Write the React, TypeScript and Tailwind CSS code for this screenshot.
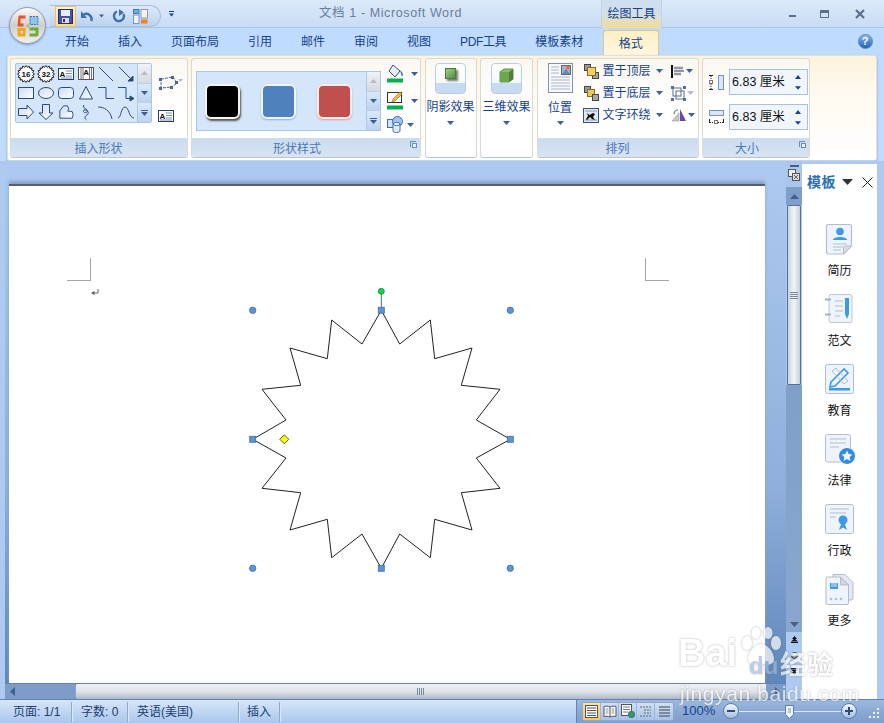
import React from "react";

const LINE = "#2a4a7c";

function Arrow({ c = "#3b5f96", w = 7 }: { c?: string; w?: number }) {
  return (
    <svg width={w} height={4} viewBox="0 0 7 4" className="shrink-0">
      <path d="M0 0h7L3.5 4z" fill={c} />
    </svg>
  );
}

function OfficeButton() {
  return (
    <div className="absolute left-[9px] top-[7px] w-[37px] h-[37px] rounded-full border border-[#8d9cb3] bg-linear-to-b from-[#fafafa] via-[#cfcfcf] to-[#efefef] shadow-[0_1px_2px_#7f93b3] flex items-center justify-center z-20">
      <svg width="24" height="24" viewBox="0 0 24 24">
        <path d="M2.500 1.500h7v3h-5v5h3v3h-5a1.500 1.500 0 0 1-1-1z" fill="#e8552a" />
        <rect x="5.500" y="5" width="4" height="4" fill="#f8d8c0" />
        <rect x="14" y="2.500" width="8" height="8" fill="#8fc4e8" stroke="#2c79b0" strokeWidth="1" strokeDasharray="2 1" />
        <path d="M1.500 14h8v8.500h-7a1 1 0 0 1-1-1zM4.500 17v2.500h2.500V17z" fill="#f2a71b" fillRule="evenodd" />
        <path d="M13.500 13.500h9v7a2 2 0 0 1-2 2h-7v-3h6v-3h-6z" fill="#6cae2f" />
        <path d="M10 12h4M12 10v4" stroke="#b5c07a" strokeWidth="1.400" />
      </svg>
    </div>
  );
}

function QuickAccess() {
  return (
    <div className="ml-[50px] mt-[5px] h-[22px] w-[111px] rounded-r-full border border-l-0 border-[#a9c0e0] bg-linear-to-b from-[#dfeafa] to-[#bcd2ef] flex items-center pl-[5px] shrink-0">
      <div className="w-[21px] h-[21px] border border-[#e3c27a] bg-linear-to-b from-[#fff4cf] to-[#ffd983] flex items-center justify-center">
        <svg width="15" height="15" viewBox="0 0 15 15">
          <rect x="0.5" y="0.5" width="14" height="14" fill="#4a4fa8" stroke="#2a2a70" />
          <rect x="3" y="1" width="9" height="6" fill="#e8ecf8" />
          <rect x="4" y="9" width="7" height="5" fill="#ddd" />
          <rect x="5" y="10" width="2" height="3" fill="#333" />
        </svg>
      </div>
      <svg width="14" height="14" viewBox="0 0 14 14" className="ml-[4px]">
        <path d="M11.5 12C12.5 6.500 8 3.500 3.500 5.500" fill="none" stroke="#3d6fb2" strokeWidth="2.4" />
        <path d="M1 2v7h6z" fill="#3d6fb2" />
      </svg>
      <span className="ml-[5px]"><Arrow w={5} /></span>
      <svg width="14" height="14" viewBox="0 0 14 14" className="ml-[8px]">
        <path d="M5 2.500A5 5 0 1 0 11.500 5" fill="none" stroke="#3d6fb2" strokeWidth="2.4" />
        <path d="M7 0v7l5-3.500z" fill="#3d6fb2" />
      </svg>
      <svg width="15" height="15" viewBox="0 0 15 15" className="ml-[7px]">
        <rect x="0.5" y="0.5" width="5.500" height="4" fill="#5fb0e0" stroke="#4a80b8" />
        <rect x="0.5" y="6" width="5.500" height="8.500" fill="#eef3fa" stroke="#7a93b8" />
        <rect x="8" y="0.5" width="6.500" height="8.500" fill="#f2f2f2" stroke="#8a9ab0" />
        <rect x="8" y="10.500" width="6.500" height="4" fill="#f08020" />
      </svg>
    </div>
  );
}

function TitleBar() {
  return (
    <div className="h-[28px] flex bg-linear-to-b from-[#dce9f9] to-[#c9dcf5] border-b border-[#a9c5ea] shrink-0">
      <QuickAccess />
      <div className="ml-[5px] mt-[11px] flex flex-col items-center gap-[1px] w-[10px] shrink-0">
        <div className="w-[5px] h-[1px] bg-[#15428b]" />
        <Arrow c="#15428b" w={5} />
      </div>
      <div className="ml-[143px] mt-[4px] w-[148px] text-[12.5px] leading-[18px] tracking-[0.6px] text-[#6a7d9c] whitespace-nowrap shrink-0">文档 1 - Microsoft Word</div>
      <div className="ml-[134px] w-[61px] h-[28px] border-x border-[#c3d2e6] bg-linear-to-b from-[#cfdef2] via-[#d3dfe6] to-[#f4dc92] text-center text-[12px] leading-[29px] text-[#15428b] shrink-0">绘图工具</div>
      <div className="ml-[127px] mt-[15px] w-[7px] h-[2px] bg-[#5b6f8c] shrink-0" />
      <div className="ml-[24px] mt-[10px] w-[9px] h-[8px] border border-[#5b6f8c] border-t-[3px] shrink-0" />
      <svg width="10" height="10" viewBox="0 0 10 10" className="ml-[26px] mt-[9px] shrink-0">
        <path d="M1 1l8 8M9 1L1 9" stroke="#5b6f8c" strokeWidth="2.2" />
      </svg>
    </div>
  );
}

const TABS = ["开始", "插入", "页面布局", "引用", "邮件", "审阅", "视图", "PDF工具", "模板素材"];

function Tabs() {
  return (
    <div className="h-[27px] bg-[#bfdbff] flex items-end pl-[50.5px] shrink-0">
      {TABS.map((t) => (
        <div key={t} className={`h-[27px] px-[14.5px] text-[12px] leading-[29px] text-[#15428b] whitespace-nowrap ${t === "PDF工具" ? "tracking-[-0.4px]" : ""}`}>{t}</div>
      ))}
      <div className="ml-[5px] w-[56px] h-[25px] rounded-t-[3px] border border-b-0 border-[#dcc88a] bg-linear-to-b from-[#fff0c4] to-[#fff6de] text-center text-[12px] leading-[26px] text-[#15428b]">格式</div>
      <div className="ml-[199px] mb-[6px] w-[15px] h-[15px] rounded-full border border-[#5a86c4] bg-linear-to-b from-[#8ab8f0] to-[#1f5fc0] text-white text-[11px] leading-[13px] text-center font-bold">?</div>
    </div>
  );
}

function Launcher() {
  return (
    <svg width="7" height="7" viewBox="0 0 7 7" className="shrink-0">
      <path d="M0.500 6V0.500H6" fill="none" stroke="#6b8cb8" />
      <rect x="2.500" y="2.500" width="4" height="4" fill="#e8f0fa" stroke="#6b8cb8" />
    </svg>
  );
}

function Group({ w, label, launcher, children }: { w: string; label?: string; launcher?: boolean; children: React.ReactNode }) {
  return (
    <div className={`${w} h-[100px] rounded-[3px] border border-[#d9d9d6] border-b-[#b9c4d4] bg-linear-to-b from-[#fbf8f1] via-[#ffffff] to-[#ffffff] flex flex-col shrink-0 overflow-hidden`}>
      <div className="h-[80px] flex">{children}</div>
      <div className={`h-[19px] pt-[3px] flex items-center justify-center relative text-[12px] text-[#4a78b6] ${label ? "bg-linear-to-b from-[#cbdcf0] to-[#d8e3f3]" : ""} ${launcher ? "pr-[18px]" : ""}`}>
        {label}
        {launcher && <span className="absolute right-[3px] top-[3px] flex"><Launcher /></span>}
      </div>
    </div>
  );
}

function Scroller({ h }: { h: string }) {
  const cell = "flex-1 flex items-center justify-center border-t border-[#b9cfec] bg-linear-to-b from-[#dce8f8] to-[#bdd3ef]";
  return (
    <div className={`w-[14px] ${h} flex flex-col shrink-0 border-l border-[#b0c8e6]`}>
      <div className="flex-1 flex items-center justify-center bg-linear-to-b from-[#f0f2f4] to-[#d5dae0]">
        <svg width="7" height="4" viewBox="0 0 7 4"><path d="M0 4h7L3.500 0z" fill="#b5bcc6" /></svg>
      </div>
      <div className={cell}><Arrow /></div>
      <div className={cell}>
        <div className="flex flex-col items-center gap-[1px]"><div className="w-[7px] h-[1px] bg-[#3b5f96]" /><Arrow /></div>
      </div>
    </div>
  );
}

function Burst({ t }: { t: string }) {
  const pts: string[] = [];
  for (let i = 0; i < 32; i++) {
    const r = i % 2 ? 6.8 : 8.5;
    const a = (i * Math.PI) / 16;
    pts.push(`${(9 + r * Math.sin(a)).toFixed(2)},${(9 - r * Math.cos(a)).toFixed(2)}`);
  }
  return (
    <svg width="18" height="18" viewBox="0 0 18 18">
      <polygon points={pts.join(" ")} fill="#fff" stroke="#222" strokeWidth="1" />
      <text x="9" y="12" textAnchor="middle" fontSize="8" fontWeight="700" fill="#111" fontFamily="Liberation Sans">{t}</text>
    </svg>
  );
}

const S = ({ children }: { children: React.ReactNode }) => (
  <svg width="18" height="18" viewBox="0 0 18 18" fill="none" stroke={LINE} strokeWidth="1">{children}</svg>
);

const GRAD = "url(#shapeFill)";

const SHAPES: React.ReactNode[] = [
  <Burst t="16" />,
  <Burst t="32" />,
  <S><rect x="1.500" y="3.500" width="15" height="11" fill="#fff" stroke="#1f3f6f" /><text x="5.500" y="12" fontSize="8" fontWeight="700" fill="#111" stroke="none" textAnchor="middle" fontFamily="Liberation Sans">A</text><path d="M9 6h6M9 8.500h6M9 11h6M4 13h11" stroke="#7d8ea8" /></S>,
  <S><rect x="1.500" y="2.500" width="15" height="12" fill="#fff" stroke="#555" /><path d="M4 3v11M6 3v11M12.500 3v11M14.500 3v11" stroke="#777" /><text x="9.200" y="10" fontSize="8" fontWeight="700" fill="#111" stroke="none" textAnchor="middle" fontFamily="Liberation Sans">A</text></S>,
  <S><path d="M2 2l14 14" /></S>,
  <S><path d="M2 2l13 13" /><path d="M11 16h5v-5z" fill={LINE} /></S>,
  <S><rect x="1.500" y="3.500" width="15" height="11" fill={GRAD} /></S>,
  <S><ellipse cx="9" cy="9" rx="7.500" ry="5.500" fill={GRAD} /></S>,
  <S><rect x="1.500" y="3.500" width="15" height="11" rx="3" fill={GRAD} /></S>,
  <S><path d="M9 2.500l6.500 12.500h-13z" fill={GRAD} /></S>,
  <S><path d="M1 3.500h8v11h8" /></S>,
  <S><path d="M1 3.500h8v11h5" /><path d="M13 12l4 2.500-4 2.500z" fill={LINE} /></S>,
  <S><path d="M1.500 5.500h8.500V2l6.500 7-6.500 7v-3.500H1.500z" fill={GRAD} /></S>,
  <S><path d="M5.500 1.500h7v8.500H16l-7 6.500L2 10h3.500z" fill={GRAD} /></S>,
  <S><path d="M2.500 15.500v-8l4-5h4l1.500 3.500-1.500 2 5 .5 1 3.500-1 3.500z" fill={GRAD} transform="scale(.95) translate(.5 .5)" /></S>,
  <S><path d="M7 2c-3 3 5 4 3 7-2 2-5-1-3-2 3-1 6 3 3 5-2 1-3 3-.5 5" /></S>,
  <S><path d="M1 4c6 0 12 3 14 12" /></S>,
  <S><path d="M1 15c3 0 3-11 7-11s4 11 9 11" /></S>,
];

function InsertShapes() {
  return (
    <Group w="w-[178px]" label="插入形状">
      <div className="ml-[4px] mt-[4px] w-[137px] h-[60px] rounded-[2px] border border-[#a9c6ea] bg-[#d6e6fa] flex shrink-0">
        <div className="flex-1 grid grid-cols-6 grid-rows-3">
          {SHAPES.map((s, i) => (
            <div key={i} className="flex items-center justify-center">{s}</div>
          ))}
        </div>
        <Scroller h="h-[58px]" />
      </div>
      <div className="ml-[5px] flex flex-col items-center">
        <svg width="26" height="16" viewBox="0 0 26 16" className="mt-[16px]">
          <path d="M4 4l12-2 4 6-5 4-11 1z" fill="none" stroke="#4a668f" strokeDasharray="3 1" />
          <g fill="#4a668f"><rect x="2" y="3" width="3" height="3" /><rect x="14" y="1" width="3" height="3" /><rect x="18" y="6" width="3" height="3" /><rect x="13" y="11" width="3" height="3" /><rect x="2" y="12" width="3" height="3" /></g>
          <path d="M21 4h5l-2.500 3z" fill="#b5bcc6" />
        </svg>
        <svg width="16" height="14" viewBox="0 0 16 14" className="mt-[18px] mr-[8px]">
          <rect x="0.500" y="1.500" width="15" height="11" fill="#fff" stroke="#1f3f6f" />
          <text x="4.500" y="10" fontSize="8" fontWeight="700" fill="#111" textAnchor="middle" fontFamily="Liberation Sans">A</text>
          <path d="M8 4h6M8 6.500h6M8 9h6M2 11h12" stroke="#7d8ea8" />
        </svg>
      </div>
    </Group>
  );
}

function Swatch({ c, b, s }: { c: string; b: string; s: string }) {
  return <div className={`w-[35px] h-[35px] rounded-[6px] border-[2px] ${c} ${b} ${s}`} />;
}

function ShapeStyles() {
  return (
    <Group w="w-[230px]" label="形状样式" launcher>
      <div className="ml-[4px] mt-[12px] w-[185px] h-[60px] border border-[#a9c6ea] bg-[#d6e6fa] flex shrink-0">
        <div className="flex-1 flex items-center pl-[8px] gap-[21px]">
          <Swatch c="bg-black" b="border-[#f4f4f4]" s="shadow-[1px_2px_2px_#555]" />
          <Swatch c="bg-[#4f81bd]" b="border-[#eef4fb]" s="shadow-[0_1px_2px_#8fb0d8]" />
          <Swatch c="bg-[#c0504d]" b="border-[#fbeeee]" s="shadow-[0_1px_2px_#d8a0a0]" />
        </div>
        <Scroller h="h-[58px]" />
      </div>
      <div className="ml-[6px] mt-[5px] flex flex-col gap-[8px]">
        <div className="flex items-center h-[19px] gap-[3px]">
          <svg width="17" height="19" viewBox="0 0 17 19">
            <path d="M6 1l7 6-5 6-6-6z" fill="#e8eef8" stroke="#334a72" />
            <path d="M13 6c2 2 3 3 3 5s-2 1-2-1z" fill="#3f7ccc" />
            <rect x="0" y="14.500" width="16" height="4" fill="#00b050" />
          </svg>
          <span className="ml-[4px]"><Arrow /></span>
        </div>
        <div className="flex items-center h-[19px] gap-[3px]">
          <svg width="17" height="19" viewBox="0 0 17 19">
            <rect x="0.500" y="1.500" width="14" height="10" fill="#fff" stroke="#333" />
            <path d="M5 11l1-3 7-7 2 2-7 7z" fill="#f0b840" stroke="#8a6a20" strokeWidth=".6" />
            <rect x="0" y="14.500" width="16" height="4" fill="#00b050" />
          </svg>
          <span className="ml-[4px]"><Arrow /></span>
        </div>
        <div className="flex items-center h-[17px] gap-[2px] -mt-[2px]">
          <svg width="18" height="17" viewBox="0 0 18 17">
            <rect x="0.500" y="3.500" width="9" height="8" fill="#cfe2f8" stroke="#3f70a8" />
            <circle cx="10.500" cy="5.500" r="5" fill="#9cc4ee" stroke="#3f70a8" />
            <path d="M6 8v7c0 2 7 2 7 0V8" fill="#dcebfb" stroke="#3f70a8" />
            <ellipse cx="9.500" cy="8" rx="3.500" ry="1.500" fill="#fff" stroke="#3f70a8" />
          </svg>
          <Arrow />
        </div>
      </div>
    </Group>
  );
}

function EffectButton({ label, cube }: { label: string; cube?: boolean }) {
  return (
    <div className="w-full flex flex-col items-center pt-[4px]">
      <div className="w-[31px] h-[31px] rounded-[4px] border border-[#b8cde6] bg-linear-to-b from-[#ffffff] via-[#f5f8fc] via-65% to-[#c6daf1] to-65% flex justify-center pt-[4px]">
        {cube ? (
          <svg width="15" height="15" viewBox="0 0 15 15">
            <path d="M1 4l4-3h9v10l-4 3H1z" fill="#8fbf6a" stroke="#5d8c48" />
            <path d="M1 4h9v10H1z" fill="#6ea552" />
            <path d="M10 4l4-3v10l-4 3z" fill="#4f8038" />
          </svg>
        ) : (
          <div className="w-[11px] h-[11px] bg-linear-to-br from-[#a4d08a] to-[#4f8f3c] border border-[#4d7a3a] shadow-[1.5px_2px_2px_#777]" />
        )}
      </div>
      <div className="mt-[4px] text-[12px] leading-[18px] text-[#15428b] whitespace-nowrap">{label}</div>
      <div className="mt-[5px] flex"><Arrow /></div>
    </div>
  );
}

function ArrangeRow({ text, icon, side, sideOff }: { text: string; icon: React.ReactNode; side: React.ReactNode; sideOff?: boolean }) {
  return (
    <div className="h-[22px] flex items-center">
      <div className="w-[17px] flex justify-center">{icon}</div>
      <span className="ml-[3px] w-[48px] text-[12px] text-[#15428b] whitespace-nowrap">{text}</span>
      <span className="ml-[5px] flex"><Arrow /></span>
      <div className="ml-[8px] flex items-center gap-[1px]">{side}<Arrow c={sideOff ? "#b5bcc6" : "#3b5f96"} /></div>
    </div>
  );
}

const LayerIcon = ({ bottom }: { bottom?: boolean }) => (
  <svg width="15" height="15" viewBox="0 0 15 15">
    <rect x="0.500" y="0.500" width="6" height="6" fill="#9a9a9a" stroke="#444" />
    {bottom ? (
      <>
        <rect x="3.500" y="3.500" width="7" height="7" fill="#f0c850" stroke="#8a6a20" />
        <rect x="8.500" y="8.500" width="6" height="6" fill="#a8a8a8" stroke="#444" />
      </>
    ) : (
      <>
        <rect x="8.500" y="8.500" width="6" height="6" fill="#a8a8a8" stroke="#444" />
        <rect x="3.500" y="3.500" width="8" height="8" fill="#f4d060" stroke="#8a6a20" />
      </>
    )}
  </svg>
);

function Arrange() {
  return (
    <Group w="w-[162px]" label="排列">
      <div className="w-[45px] flex flex-col items-center pt-[4px] shrink-0">
        <svg width="25" height="30" viewBox="0 0 25 30">
          <rect x="0.500" y="0.500" width="24" height="29" fill="#f7f9fc" stroke="#7f93b0" />
          <rect x="13.500" y="2.500" width="9" height="9" fill="#9fb4d0" stroke="#667" />
          <path d="M14 11l4-5 4 5z" fill="#6f86a8" />
          <circle cx="20" cy="4.500" r="1.700" fill="#e87020" />
          <path d="M3 4h8M3 7h8M3 10h8M3 14h19M3 17h19M3 20h19M3 23h19M3 26h19" stroke="#a9b6c9" />
        </svg>
        <div className="mt-[6px] text-[12px] leading-[18px] text-[#15428b]">位置</div>
        <div className="mt-[4px] flex"><Arrow /></div>
      </div>
      <div className="pt-[1px]">
        <ArrangeRow text="置于顶层" icon={<LayerIcon />} side={
          <svg width="14" height="13" viewBox="0 0 14 13"><path d="M1 0v13" stroke="#111" strokeWidth="2" /><path d="M3 3h9M3 9h7" stroke="#8a9ab0" strokeWidth="2.500" /><path d="M3 6h10" stroke="#333" /></svg>
        } />
        <ArrangeRow text="置于底层" icon={<LayerIcon bottom />} side={
          <svg width="15" height="15" viewBox="0 0 15 15"><rect x="2" y="2" width="8" height="8" fill="none" stroke="#566f96" /><rect x="5" y="5" width="8" height="8" fill="none" stroke="#566f96" /><g fill="#566f96"><rect x="0" y="0" width="3" height="3" /><rect x="12" y="0" width="3" height="3" /><rect x="0" y="12" width="3" height="3" /><rect x="12" y="12" width="3" height="3" /></g></svg>
        } sideOff />
        <ArrangeRow text="文字环绕" icon={
          <svg width="16" height="15" viewBox="0 0 16 15"><rect x="0.500" y="0.500" width="15" height="14" fill="#dfe8f4" stroke="#33507c" /><path d="M2 3h12M2 12h12" stroke="#8a9ab0" /><path d="M4 5l2.500 2L10 5l2 1-2 3 2 3-3-1-2-2-3 3-1-1 2-3z" fill="#111" /></svg>
        } side={
          <svg width="16" height="14" viewBox="0 0 16 14"><path d="M1 13L8 5v8z" fill="#c4c8cc" stroke="#888" strokeWidth=".5" /><path d="M9 1l6 12H9z" fill="#6a4aa8" /><path d="M3 6c0-3 2-4 4-4" fill="none" stroke="#3b5f96" /></svg>
        } />
      </div>
    </Group>
  );
}

function SizeInput({ height }: { height?: boolean }) {
  return (
    <div className="flex items-center h-[26px]">
      {height ? (
        <svg width="15" height="15" viewBox="0 0 15 15"><path d="M0 0.500h4M0 14.500h4" stroke="#222" /><path d="M2 1v13" stroke="#222" strokeDasharray="1 1" /><rect x="0.500" y="5.500" width="3" height="3" fill="#fff" stroke="#777" /><rect x="9.500" y="0.500" width="5" height="14" fill="#dbe6f5" stroke="#7a93b8" /></svg>
      ) : (
        <svg width="15" height="15" viewBox="0 0 15 15"><rect x="0.500" y="0.500" width="14" height="5" fill="#dbe6f5" stroke="#7a93b8" /><path d="M0.500 9v4M14.500 9v4" stroke="#222" /><path d="M1 12.500h13" stroke="#222" strokeDasharray="1 1" /><rect x="5.500" y="10.500" width="3" height="3" fill="#fff" stroke="#777" /></svg>
      )}
      <div className="ml-[5px] w-[79px] h-[26px] border border-[#a9c0e0] bg-[#f1f6fd] flex items-center pl-[2px] pr-[6px]">
        <span className="flex-1 text-[12.5px] text-[#111] whitespace-nowrap">6.83 厘米</span>
        <div className="flex flex-col gap-[7px]">
          <svg width="6" height="4" viewBox="0 0 6 4"><path d="M0 4h6L3 0z" fill="#15428b" /></svg>
          <Arrow c="#15428b" w={6} />
        </div>
      </div>
    </div>
  );
}

function Ribbon() {
  return (
    <div className="h-[106px] bg-[#bfdbff] shrink-0 px-[7px]">
      <div className="h-full rounded-[3px] border border-[#e4e0d4] border-b-[#c5d5ea] bg-linear-to-b from-[#fdf3dd] via-[#fffaf1] via-40% to-[#ffffff] flex items-start pt-[2px] pl-[1.5px] gap-[3.5px] shadow-[0_1px_2px_#7d9ac4]">
        <InsertShapes />
        <ShapeStyles />
        <Group w="w-[52px]"><EffectButton label="阴影效果" /></Group>
        <Group w="w-[53px]"><EffectButton label="三维效果" cube /></Group>
        <Arrange />
        <Group w="w-[108px]" label="大小" launcher>
          <div className="pl-[6px] pt-[10px] flex flex-col gap-[9px]">
            <SizeInput height />
            <SizeInput />
          </div>
        </Group>
      </div>
    </div>
  );
}

const STAR = [424,91,479,192,571,120,584,236,696,204,664,316,780,328,709,420,811,478,709,534,780,625,664,638,696,750,584,718,571,833,479,762,424,865,366,762,275,833,262,718,150,750,182,638,66,625,138,534,38,478,138,420,66,328,182,316,150,204,262,236,275,120,366,192];

function Star() {
  const pts = STAR.map((v) => (v / 3).toFixed(1));
  const s: string[] = [];
  for (let i = 0; i < pts.length; i += 2) s.push(`${pts[i]},${pts[i + 1]}`);
  const corners = [[12.7, 30.3], [270.3, 30.3], [12.7, 288.3], [270.3, 288.3]];
  const mids = [[141.3, 30.3], [12.7, 159.3], [270.3, 159.3], [141.3, 288.3]];
  return (
    <svg width="280" height="300" viewBox="0 0 280 300" className="absolute left-[231px] top-[94px]">
      <polygon points={s.join(" ")} fill="#fff" stroke="#222" strokeWidth="1" />
      <path d="M141.300 12v18" stroke="#3c6ea5" strokeWidth="1" />
      <circle cx="141.300" cy="11.300" r="3" fill="#00e040" stroke="#2a7a4a" strokeWidth=".8" />
      {corners.map(([x, y]) => (
        <circle key={`${x}${y}`} cx={x} cy={y} r="3.200" fill="#5b94de" stroke="#41719c" strokeWidth=".8" />
      ))}
      {mids.map(([x, y]) => (
        <rect key={`${x}${y}`} x={x - 3} y={y - 3} width="6" height="6" fill="#5b94de" stroke="#41719c" strokeWidth=".8" />
      ))}
      <path d="M44.300 154.800l4.500 4.500-4.500 4.500-4.500-4.500z" fill="#ffff00" stroke="#333" strokeWidth=".8" />
    </svg>
  );
}

function Page() {
  return (
    <div className="relative w-[756px] h-full bg-white border-t-[2px] border-[#595f68] shadow-[0_-3px_3px_#8aa3c6]">
      <div className="absolute left-[58px] top-[72px] w-[24px] h-[23px] border-r border-b border-[#a5a5a5]" />
      <div className="absolute left-[636px] top-[72px] w-[24px] h-[23px] border-l border-b border-[#a5a5a5]" />
      <svg width="8" height="8" viewBox="0 0 8 8" className="absolute left-[82px] top-[103px]">
        <path d="M7 0v4H1.500" fill="none" stroke="#666" />
        <path d="M3.500 1.800v4.400L0 4z" fill="#666" />
      </svg>
      <Star />
    </div>
  );
}

function VScroll() {
  return (
    <div className="w-[16px] h-full flex flex-col bg-[#aecaf0] shrink-0">
      <div className="h-[26px] flex flex-col items-center pt-[4px] bg-[#aac6ea]">
        <div className="w-[9px] h-[2px] bg-[#4a5f80]" />
        <svg width="12" height="12" viewBox="0 0 12 12" className="mt-[2px]">
          <rect x="0.500" y="0.500" width="7" height="7" fill="#eee" stroke="#555" />
          <rect x="4.500" y="4.500" width="7" height="7" fill="#ddd" stroke="#555" />
          <path d="M6 6l4 4M10 6l-4 4" stroke="#444" strokeWidth=".8" />
        </svg>
      </div>
      <div className="h-[18px] bg-[#7f9fca] flex items-center justify-center">
        <svg width="9" height="5" viewBox="0 0 9 5"><path d="M0 5h9L4.500 0z" fill="#3f5f8f" /></svg>
      </div>
      <div className="h-[180px] mx-[1px] rounded-[1px] border border-[#54709f] bg-linear-to-r from-[#c8d3e0] via-[#f2f5f8] to-[#c5d0de] flex items-center justify-center">
        <div className="w-[8px] flex flex-col gap-[1px]">
          <div className="h-[1px] bg-[#7d8a9c]" /><div className="h-[1px] bg-[#7d8a9c]" /><div className="h-[1px] bg-[#7d8a9c]" /><div className="h-[1px] bg-[#7d8a9c]" />
        </div>
      </div>
      <div className="flex-1 bg-linear-to-b from-[#7f9fca] to-[#8aa6ce]" />
      <div className="h-[15px] bg-[#8aa6ce] flex items-center justify-center">
        <svg width="9" height="5" viewBox="0 0 9 5"><path d="M0 0h9L4.500 5z" fill="#4a5f80" /></svg>
      </div>
      <div className="h-[67px] flex flex-col items-center pt-[4px] gap-[9px]">
        <svg width="7" height="7" viewBox="0 0 7 7"><path d="M3.500 0L1 3h5zM3.500 2.500L0 5.500h7z" fill="#111" /><path d="M0 6.500h7" stroke="#111" /></svg>
        <div className="w-[7px] h-[7px] rounded-full bg-linear-to-b from-[#e8e8e8] to-[#888] border border-[#333]" />
        <svg width="7" height="7" viewBox="0 0 7 7"><path d="M0 0.500h7" stroke="#111" /><path d="M0 1.500h7L3.500 4.500zM1 4h5L3.500 7z" fill="#111" /></svg>
      </div>
    </div>
  );
}

function HScroll() {
  return (
    <div className="h-[16px] flex border-t border-[#5f83b8] shrink-0">
      <div className="w-[70px] bg-[#7d9dc8] flex items-center pl-[5px]">
        <svg width="5" height="9" viewBox="0 0 5 9"><path d="M5 0v9L0 4.500z" fill="#3f5f8f" /></svg>
      </div>
      <div className="flex-1 rounded-l-[2px] border-l border-[#8fa5c4] bg-linear-to-b from-[#eef1f5] via-[#dfe4ea] to-[#aeb8c6] flex items-center justify-center">
        <div className="flex gap-[1px] ml-[-2px]">
          <div className="w-[1px] h-[7px] bg-[#7d8a9c]" /><div className="w-[1px] h-[7px] bg-[#7d8a9c]" /><div className="w-[1px] h-[7px] bg-[#7d8a9c]" /><div className="w-[1px] h-[7px] bg-[#7d8a9c]" />
        </div>
      </div>
      <div className="w-[20px] bg-[#7d9dc8] flex items-center pl-[9px]">
        <svg width="5" height="9" viewBox="0 0 5 9"><path d="M0 0v9L5 4.500z" fill="#3f5f8f" /></svg>
      </div>
    </div>
  );
}

const IconBox = ({ children }: { children: React.ReactNode }) => (
  <svg width="32" height="32" viewBox="0 0 32 32">{children}</svg>
);

const DOCICON: React.ReactNode[] = [
  <IconBox><path d="M4.500 1.500h21a2 2 0 0 1 2 2V23l-8 8h-15a2 2 0 0 1-2-2V3.500a2 2 0 0 1 2-2z" fill="#edf4fd" stroke="#b5bdc8" strokeWidth="1.200" /><circle cx="16" cy="8.500" r="3.800" fill="#3f97ea" /><path d="M9 17c0-4 14-4 14 0z" fill="#3f97ea" /><path d="M9 21h14M9 24h10M9 27h8" stroke="#b5bdc8" /><path d="M19.500 31v-6a2 2 0 0 1 2-2h6z" fill="#d9dde3" stroke="#b5bdc8" /></IconBox>,
  <IconBox><rect x="5" y="1.500" width="23" height="28" rx="2" fill="#edf4fd" stroke="#c0c6d0" /><path d="M1 6.500h6M1 21.500h6" stroke="#a9aeb6" strokeWidth="2" /><path d="M11 8h8M11 13h8M11 18h8M11 23h5" stroke="#b5bdc8" /><rect x="21" y="5" width="4" height="16" fill="#3f97ea" /><path d="M21 21h4l-2 5z" fill="#3f97ea" /></IconBox>,
  <IconBox><rect x="1.500" y="1.500" width="28" height="29" rx="2" fill="#edf4fd" stroke="#b5bdc8" /><path d="M7 19L20 6l4 4L11 23l-5 1z" fill="none" stroke="#3f97ea" strokeWidth="1.600" /><path d="M8 8l4-3 12 13-4 3z" fill="none" stroke="#b5bdc8" /><rect x="5" y="25" width="21" height="2.500" fill="#3f97ea" /></IconBox>,
  <IconBox><path d="M3.500 1.500h21a2 2 0 0 1 2 2V18l-9 11h-14a2 2 0 0 1-2-2V3.500a2 2 0 0 1 2-2z" fill="#edf4fd" stroke="#b5bdc8" /><path d="M6 6h16M6 10h16M6 14h9" stroke="#b5bdc8" /><circle cx="23" cy="23" r="8.500" fill="#2f8ae0" stroke="#fff" strokeWidth="1" /><path d="M23 17.500l1.700 3.600 3.800.4-2.800 2.600.8 3.800-3.500-2-3.500 2 .8-3.800-2.800-2.600 3.800-.4z" fill="#edf4fd" /></IconBox>,
  <IconBox><rect x="1.500" y="1.500" width="28" height="29" rx="2" fill="#edf4fd" stroke="#b5bdc8" /><path d="M6 6h19M6 10h16M6 14h6" stroke="#b5bdc8" /><circle cx="19" cy="17" r="4.500" fill="#3f97ea" /><path d="M15 27l2.500-7h3L23 27l-4-2.500z" fill="#3f97ea" /></IconBox>,
  <IconBox><path d="M9 1.500h12l8 8V25a2 2 0 0 1-2 2H9z" fill="#e3e9f2" stroke="#b5bdc8" /><path d="M3.500 4h13l8 8v18a1.500 1.500 0 0 1-1.500 1.500H3.500a1.500 1.500 0 0 1-1.500-1.500V5.500A1.500 1.500 0 0 1 3.500 4z" fill="#edf4fd" stroke="#b5bdc8" /><path d="M16.500 4v8h8z" fill="#d3d8e0" stroke="#b5bdc8" /><rect x="6" y="10" width="8" height="6" fill="#3f97ea" /><path d="M8 10v4M10 10v4M12 10v4" stroke="#fff" strokeWidth=".8" /><circle cx="7" cy="26" r="1.300" fill="#b5bdc8" /><circle cx="12" cy="26" r="1.300" fill="#b5bdc8" /><circle cx="17" cy="26" r="1.300" fill="#b5bdc8" /></IconBox>,
];

const PANEL = ["简历", "范文", "教育", "法律", "行政", "更多"];

function Panel() {
  return (
    <div className="w-[75px] mt-[3px] bg-white flex flex-col items-center shrink-0">
      <div className="w-full h-[33px] flex items-center pl-[5px] pt-[3px]">
        <span className="text-[14px] font-bold text-[#2a6fb5] leading-none whitespace-nowrap tracking-[0.5px]">模板</span>
        <svg width="11" height="6" viewBox="0 0 11 6" className="ml-[6px]"><path d="M0 0h11L5.500 6z" fill="#333" /></svg>
        <svg width="11" height="11" viewBox="0 0 11 11" className="ml-[9px]"><path d="M0.500 0.500l10 10M10.500 0.500l-10 10" stroke="#222" strokeWidth="1" /></svg>
      </div>
      <div className="mt-[26px] flex flex-col items-center gap-[8px]">
        {PANEL.map((t, i) => (
          <div key={t} className="h-[62px] flex flex-col items-center">
            {DOCICON[i]}
            <div className="mt-[7px] text-[12px] leading-[18px] text-[#111]">{t}</div>
          </div>
        ))}
      </div>
    </div>
  );
}

function Main() {
  return (
    <div className="flex-1 min-h-0 flex bg-[#aecaf0]">
      <div className="w-[5px] shrink-0" />
      <div className="flex-1 flex flex-col min-w-0 bg-linear-to-b from-[#aecaf0] via-[#8fb0dc] via-60% to-[#5c83b8]">
        <div className="flex-1 min-h-0 pl-[4px] pt-[23px]">
          <Page />
        </div>
        <HScroll />
      </div>
      <VScroll />
      <Panel />
      <div className="w-[7px] shrink-0" />
    </div>
  );
}

function StatusItem({ w, children }: { w: string; children?: React.ReactNode }) {
  return <div className={`${w} h-[20px] border-r border-[#8faad0] shadow-[1px_0_0_#dce8f8] flex items-center text-[12px] text-[#1f3d70] whitespace-nowrap shrink-0`}>{children}</div>;
}

function ViewButtons() {
  const cell = "w-[18px] h-full flex items-center justify-center border-r border-[#9db6d9]";
  return (
    <div className="ml-[5px] w-[92px] h-[19px] rounded-[2px] border border-[#8da8cf] bg-linear-to-b from-[#cfe0f6] to-[#a8c3e8] flex">
      <div className={`${cell} bg-linear-to-b from-[#ffdf9a] to-[#ffc35a]`}>
        <svg width="13" height="13" viewBox="0 0 13 13"><rect x="0.500" y="0.500" width="12" height="12" fill="#fff" stroke="#555" /><path d="M2 3h9M2 5.500h9M2 8h9M2 10.500h9" stroke="#555" /></svg>
      </div>
      <div className={cell}>
        <svg width="14" height="13" viewBox="0 0 14 13"><path d="M7 2C5 1 3 1 1 1.500v10C3 11 5 11 7 12c2-1 4-1 6-.5v-10C11 1 9 1 7 2zM7 2v10" fill="#fff" stroke="#555" /><path d="M2.500 4h3M2.500 6h3M2.500 8h3M8.500 4h3M8.500 6h3M8.500 8h3" stroke="#777" strokeWidth=".8" /></svg>
      </div>
      <div className={cell}>
        <svg width="14" height="14" viewBox="0 0 14 14"><rect x="0.500" y="0.500" width="10" height="11" fill="#fff" stroke="#555" /><path d="M2 3h7M2 5.500h7M2 8h5" stroke="#777" /><circle cx="10.500" cy="10.500" r="3.200" fill="#3f9a4a" stroke="#2a6fb5" /></svg>
      </div>
      <div className={cell}>
        <svg width="13" height="13" viewBox="0 0 13 13"><path d="M1 2h11M5 5h7M5 8h7M1 11h11" stroke="#666" strokeDasharray="2 1" /></svg>
      </div>
      <div className="flex-1 flex items-center justify-center">
        <svg width="13" height="13" viewBox="0 0 13 13"><path d="M1 2h11M1 5h11M1 8h11M1 11h11" stroke="#444" /></svg>
      </div>
    </div>
  );
}

const ZoomCircle = ({ plus }: { plus?: boolean }) => (
  <div className="w-[16px] h-[16px] rounded-full border border-[#5b7fb0] bg-linear-to-b from-[#f2f6fb] to-[#a9c0de] flex items-center justify-center shrink-0 relative">
    <div className="w-[8px] h-[2px] bg-[#2f4a75]" />
    {plus && <div className="absolute w-[2px] h-[8px] bg-[#2f4a75]" />}
  </div>
);

function StatusBar() {
  return (
    <div className="h-[24px] flex border-t border-[#5f83b8] shrink-0">
      <div className="w-[576px] h-full bg-linear-to-b from-[#d7e6fa] via-[#c0d6f3] to-[#a9c6ee] flex items-center pl-[13px]">
        <StatusItem w="w-[59px]">页面: 1/1</StatusItem>
        <div className="w-[9px]" />
        <StatusItem w="w-[47px]">字数: 0</StatusItem>
        <div className="w-[9px]" />
        <StatusItem w="w-[102px]">英语(美国)</StatusItem>
        <div className="w-[8px]" />
        <StatusItem w="w-[33px]">插入</StatusItem>
      </div>
      <div className="flex-1 bg-linear-to-b from-[#9db9e0] via-[#8aa8d4] to-[#7f9ecb] border-l border-[#5f83b8] flex items-center pb-[1px]">
        <ViewButtons />
        <span className="ml-[8px] w-[36px] text-[13px] text-[#15428b] whitespace-nowrap">100%</span>
        <span className="ml-[5px] flex"><ZoomCircle /></span>
        <div className="w-[102px] h-[1px] bg-[#dfe8f5] relative">
          <svg width="9" height="14" viewBox="0 0 9 14" className="absolute top-[-6px] left-[46px]"><path d="M0.500 0.500h8v9L4.500 13.500 0.500 9.500z" fill="#eef3fa" stroke="#5b7fb0" /><rect x="3" y="3" width="3" height="5" fill="#b5c6de" /></svg>
        </div>
        <ZoomCircle plus />
        <svg width="12" height="12" viewBox="0 0 12 12" className="ml-[11px] mt-[6px]"><g fill="#eaf1fa"><rect x="9" y="0" width="2" height="2" /><rect x="5" y="4" width="2" height="2" /><rect x="9" y="4" width="2" height="2" /><rect x="1" y="8" width="2" height="2" /><rect x="5" y="8" width="2" height="2" /><rect x="9" y="8" width="2" height="2" /></g></svg>
      </div>
    </div>
  );
}

function Watermark() {
  return (
    <div className="absolute left-[676px] top-[626px] w-[170px] h-[80px] pointer-events-none z-30 opacity-70 text-white drop-shadow-[0_0_1px_rgba(110,110,110,0.75)]">
      <span className="absolute left-[2px] top-[8px] text-[38px] leading-none font-bold font-['Liberation_Sans']">Bai</span>
      <svg width="44" height="40" viewBox="0 0 44 40" className="absolute left-[62px] top-[1px]" fill="#fff">
        <ellipse cx="9" cy="16" rx="5" ry="7" />
        <ellipse cx="18" cy="6" rx="4.500" ry="6" />
        <ellipse cx="30" cy="6" rx="4.500" ry="6" />
        <ellipse cx="38" cy="16" rx="5" ry="7" />
        <path d="M23 17c-7 0-13 9-13 15 0 7 8 6 13 4 5 2 13 3 13-4 0-6-6-15-13-15z" />
      </svg>
      <span className="absolute left-[73px] top-[28px] text-[24px] leading-none font-bold font-['Liberation_Sans'] text-[#9fb8da]">du</span>
      <span className="absolute left-[104px] top-[26px] text-[26px] leading-none font-bold tracking-[1px]">经验</span>
      <span className="absolute left-[4px] top-[57px] text-[21px] leading-none font-['Liberation_Sans'] tracking-[0.6px] whitespace-nowrap">jingyan.baidu.com</span>
    </div>
  );
}

export default function App() {
  return (
    <div className="relative w-[884px] h-[723px] overflow-hidden flex flex-col bg-[#bfdbff] font-['Liberation_Sans','Noto_Sans_CJK_SC',sans-serif]">
      <svg width="0" height="0" className="absolute">
        <defs>
          <linearGradient id="shapeFill" x1="0" y1="0" x2="1" y2="1">
            <stop offset="0" stopColor="#c9dcf3" />
            <stop offset="1" stopColor="#ffffff" />
          </linearGradient>
        </defs>
      </svg>
      <OfficeButton />
      <TitleBar />
      <Tabs />
      <Ribbon />
      <Main />
      <StatusBar />
      <Watermark />
    </div>
  );
}
